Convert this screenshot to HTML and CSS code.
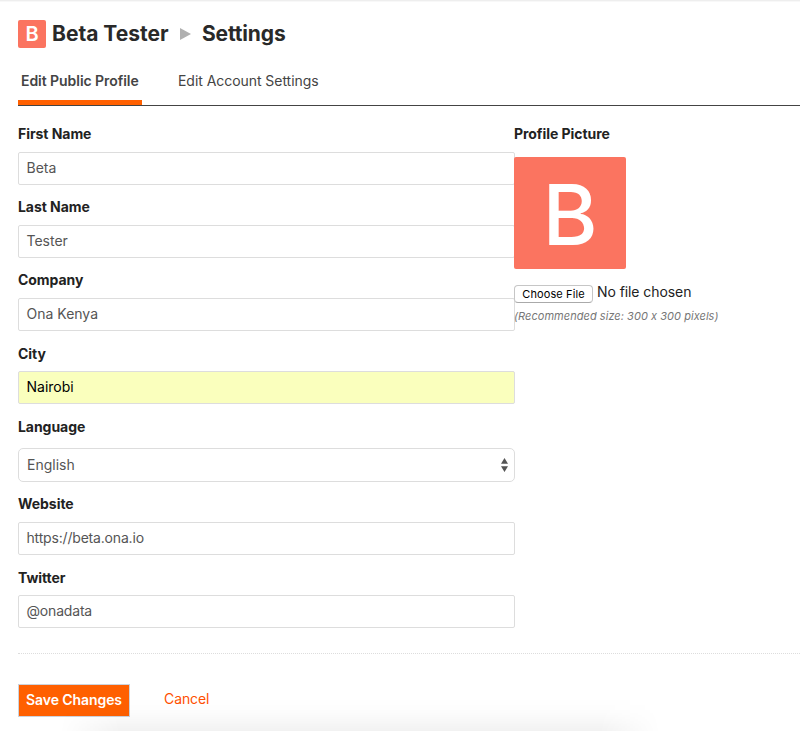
FILE: index.html
```
<!DOCTYPE html>
<html lang="en">
<head>
<meta charset="utf-8">
<title>Settings</title>
<link rel="stylesheet" href="styles.css">
</head>
<body>
<header class="crumbs">
  <span class="avatar-small">B</span>
  <span class="crumb user">Beta Tester</span>
  <svg class="arrow" width="11" height="12" viewBox="0 0 11 12"><path d="M0 0L11 6L0 12Z" fill="#b0b0b0"/></svg>
  <span class="crumb page">Settings</span>
</header>
<nav class="tabs">
  <a class="tab active">Edit Public Profile</a>
  <a class="tab">Edit Account Settings</a>
</nav>
<main class="content">
  <form class="fields">
    <div class="field"><label>First Name</label><div class="input">Beta</div></div>
    <div class="field"><label>Last Name</label><div class="input">Tester</div></div>
    <div class="field"><label>Company</label><div class="input">Ona Kenya</div></div>
    <div class="field snug"><label>City</label><div class="input filled">Nairobi</div></div>
    <div class="field language"><label>Language</label><div class="input select"><span>English</span>
      <svg width="7" height="14" viewBox="0 0 7 14"><path d="M3.5 0L7 5.8H0ZM0 8.2H7L3.5 14Z" fill="#555"/></svg></div></div>
    <div class="field"><label>Website</label><div class="input handle">https://beta.ona.io</div></div>
    <div class="field snug"><label>Twitter</label><div class="input handle">@onadata</div></div>
  </form>
  <aside class="picture">
    <label>Profile Picture</label>
    <div class="avatar-large">B</div>
    <div class="file"><span class="choose">Choose File</span><span class="none">No file chosen</span></div>
    <em class="hint">(Recommended size: 300 x 300 pixels)</em>
  </aside>
</main>
<footer class="actions">
  <span class="save">Save Changes</span>
  <a class="cancel">Cancel</a>
</footer>
<div class="shade"></div>
</body>
</html>
```
FILE: styles.css
```
* { box-sizing: border-box; }
body {
  margin: 0;
  height: 731px;
  overflow: hidden;
  position: relative;
  background: #fff;
  border-top: 1px solid #eee;
  box-shadow: inset 0 1px 0 #f8f8f8;
  font: 14px/20px Inter, "Liberation Sans", sans-serif;
  color: #222;
  white-space: nowrap;
}
.crumbs {
  display: flex;
  align-items: center;
  height: 28px;
  margin: 19px 0 0 18px;
}
.avatar-small {
  width: 28px;
  height: 28px;
  border-radius: 2px;
  background: #fb7460;
  color: #fff;
  font-size: 20px;
  font-weight: 600;
  line-height: 28px;
  text-align: center;
}
.crumb { font-size: 21px; font-weight: 700; line-height: 28px; color: #292929; }
.user { width: 118px; margin-left: 6px; letter-spacing: 0; }
.arrow { margin: 0 11px 0 10px; }
.page { letter-spacing: -0.15px; }
.tabs {
  display: flex;
  gap: 33px;
  height: 40px;
  margin: 18px 0 0 18px;
  border-bottom: 1px solid #444;
}
.tab { height: 39px; padding: 5px 3px 0; color: #444; letter-spacing: -0.05px; }
.tab.active { width: 124px; border-bottom: 5px solid #ff6000; font-weight: 600; }
.content { display: flex; height: 547px; padding: 18px 0 0 18px; }
.fields { width: 497px; }
.field { height: 73px; }
label {
  display: block;
  height: 20px;
  margin-bottom: 8px;
  font-weight: 700;
  letter-spacing: -0.05px;
}
.input {
  height: 33px;
  padding: 0 7.5px;
  border: 1px solid #ddd;
  border-radius: 2px;
  line-height: 30px;
  color: #555;
}
.handle { letter-spacing: -0.18px; }
.filled { background: #faffbd; color: #000; }
.snug { padding-top: 1px; }
.snug label { margin-bottom: 7px; }
.language { height: 78px; padding-top: 1px; }
.language label { margin-bottom: 11px; }
.select {
  display: flex;
  align-items: center;
  justify-content: space-between;
  height: 34px;
  padding: 0 6px 0 8px;
  border-radius: 5px;
}
.picture { z-index: 1; margin-left: -1px; }
.picture label { margin-bottom: 13px; }
.avatar-large {
  width: 112px;
  height: 112px;
  border-radius: 2px;
  background: #fb7460;
  color: #fff;
  font-size: 84px;
  font-weight: 500;
  line-height: 115px;
  text-align: center;
}
.file { display: flex; margin-top: 13px; }
.none { letter-spacing: -0.08px; }
.choose {
  width: 79px;
  height: 18px;
  margin: 3px 4px 0 0;
  border: 1px solid #c6c6c6;
  border-bottom-color: #aaa;
  border-radius: 4px;
  background: #fff;
  font-size: 11px;
  line-height: 17px;
  text-align: center;
  letter-spacing: 0.1px;
  color: #000;
}
.hint {
  display: block;
  margin-top: 3px;
  font-size: 11px;
  font-feature-settings: "calt" 0;
  letter-spacing: 0.05px;
  color: #777;
}
.actions {
  display: flex;
  height: 78px;
  margin-left: 18px;
  padding-top: 30px;
  border-top: 1px dotted #ddd;
}
.save {
  width: 112px;
  height: 33px;
  border: 1px solid #ccd3dc;
  background: #ff6000;
  color: #fff;
  font-weight: 600;
  line-height: 30px;
  text-align: center;
  letter-spacing: -0.08px;
}
.cancel { margin-left: 34px; color: #ff5000; line-height: 30px; letter-spacing: -0.1px; }
.shade {
  position: absolute;
  left: 60px;
  right: 140px;
  bottom: 0;
  height: 34px;
  background: linear-gradient(rgba(0, 0, 0, 0), rgba(0, 0, 0, 0.012) 45%, rgba(0, 0, 0, 0.05));
  mask-image: linear-gradient(90deg, transparent, #000 60px, #000 calc(100% - 60px), transparent);
}
```
